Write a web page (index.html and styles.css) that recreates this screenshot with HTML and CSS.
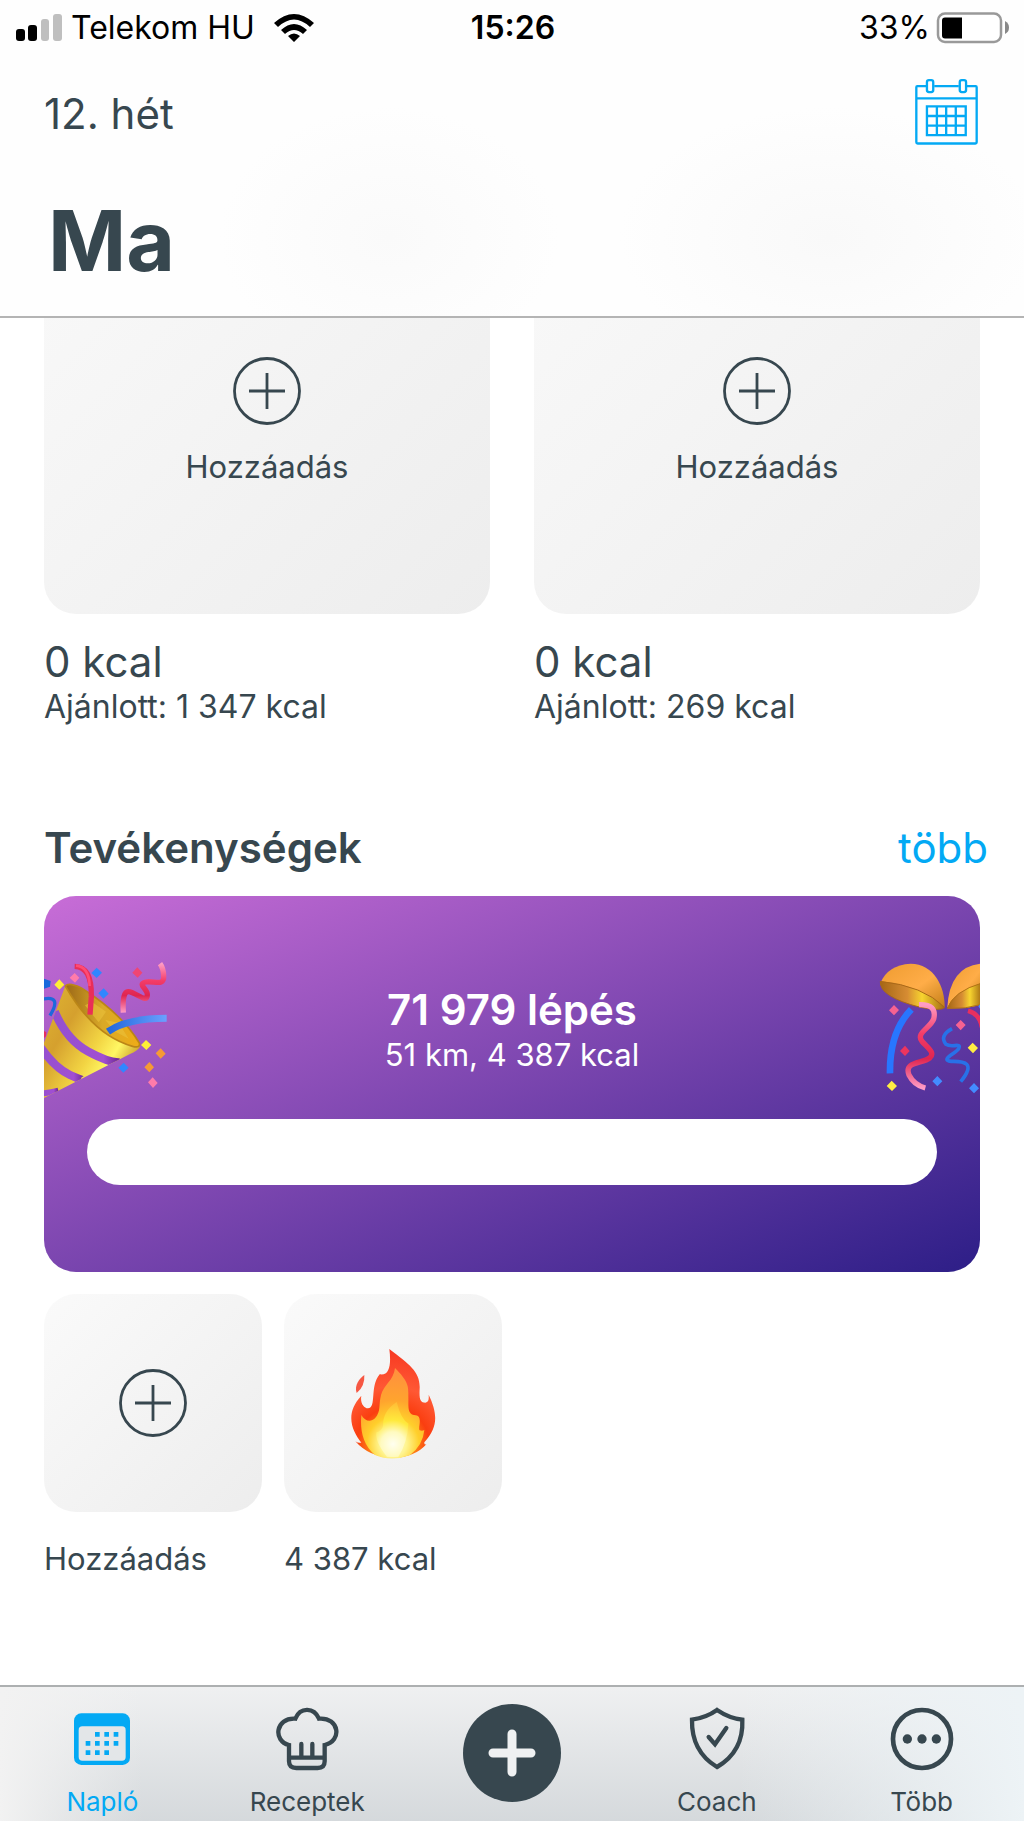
FILE: index.html
```html
<!DOCTYPE html>
<html lang="hu">
<head>
<meta charset="utf-8">
<meta name="viewport" content="width=device-width, initial-scale=1">
<title>Ma</title>
<link rel="stylesheet" href="styles.css">
</head>
<body>
<svg class="defs" aria-hidden="true">
  <symbol id="add" viewBox="0 0 68 68"><g fill="none" stroke="#37474f" stroke-width="2.8"><circle cx="34" cy="34" r="32.5"/><path d="M34 16v36M16 34h36"/></g></symbol>
</svg>
<header class="top">
  <div class="status">
    <div class="carrier">
      <svg width="46" height="28" viewBox="0 0 46 28" aria-hidden="true"><rect x="0" y="15" width="9" height="12" rx="3"/><rect x="12" y="11" width="9" height="16" rx="3"/><g fill="#bfbfbf"><rect x="25" y="5" width="8" height="22" rx="3"/><rect x="37" y="0" width="9" height="27" rx="3"/></g></svg>
      <span>Telekom HU</span>
      <svg class="wifi" width="40" height="28" viewBox="0 0 40 28" aria-hidden="true"><path d="M20 28l-6-6q6-5 12 0zM0 9Q20-9 40 9l-4 4Q20-2 4 13zM7 16q13-12 26 0l-4 4Q20 12 11 20z"/></svg>
    </div>
    <time class="clock">15:26</time>
    <div class="power">
      <span>33%</span>
      <svg width="74" height="32" viewBox="0 0 74 32" aria-hidden="true"><rect x="2" y="1.5" width="63" height="28.500" rx="7" fill="#fff" stroke="#999" stroke-width="2.500"/><path d="M69 9q4 2 4 6.500t-4 6.500z" fill="#888"/><path d="M9 5.500h17v21H9a3 3 0 0 1-3-3v-15a3 3 0 0 1 3-3z"/></svg>
    </div>
  </div>
  <div class="week">
    <span>12. hét</span>
    <button class="icon-button" type="button" aria-label="Naptár">
      <svg width="63" height="66" viewBox="1208 237 190 198"><g fill="none" stroke="#03a9f4" stroke-width="7"><path d="M1242 258h-27q-3 0-3 3v166q0 4 4 4h174q4 0 4-4V261q0-3-3-3h-28M1266 258h74M1212 295h182"/><rect x="1244" y="240" width="19" height="36" rx="6"/><rect x="1343" y="240" width="19" height="36" rx="6"/><path d="M1244 319h117v87h-117zM1274 319v87M1302 319v87M1331 319v87M1244 348h117M1244 377h117"/></g></svg>
    </button>
  </div>
  <h1>Ma</h1>
</header>

<main>
  <section class="meals">
    <article>
      <button class="tile meal" type="button"><svg width="68" height="68"><use href="#add"/></svg><span>Hozzáadás</span></button>
      <p class="amount">0 kcal</p>
      <p class="note">Ajánlott: 1 347 kcal</p>
    </article>
    <article>
      <button class="tile meal" type="button"><svg width="68" height="68"><use href="#add"/></svg><span>Hozzáadás</span></button>
      <p class="amount">0 kcal</p>
      <p class="note">Ajánlott: 269 kcal</p>
    </article>
  </section>

  <section>
    <div class="section-head"><h2>Tevékenységek</h2><a href="#tobb">több</a></div>
    <div class="steps">
      <div class="steps-row">
        <svg width="123" height="140" viewBox="42 240 369 420" aria-hidden="true">
          <defs>
            <linearGradient id="cone" x1="0" y1="0" x2="1" y2=".7"><stop offset="0" stop-color="#e0b832"/><stop offset=".35" stop-color="#d5a02e"/><stop offset=".62" stop-color="#f2d443"/><stop offset=".78" stop-color="#fff763"/><stop offset="1" stop-color="#b98217"/></linearGradient>
            <linearGradient id="mouth"><stop offset="0" stop-color="#9c6817"/><stop offset=".5" stop-color="#d9a928"/><stop offset="1" stop-color="#efac16"/></linearGradient>
            <linearGradient id="band"><stop offset="0" stop-color="#9450cf"/><stop offset=".75" stop-color="#a14fd2"/><stop offset="1" stop-color="#6a2590"/></linearGradient>
            <linearGradient id="pink" x1="0" y1="0" x2="0" y2="1"><stop offset="0" stop-color="#ff9cc4"/><stop offset=".35" stop-color="#f33c68"/><stop offset=".65" stop-color="#df2550"/><stop offset="1" stop-color="#ff9cc6"/></linearGradient>
            <linearGradient id="blue"><stop offset="0" stop-color="#2268dc"/><stop offset="1" stop-color="#6ba0ff"/></linearGradient>
            <clipPath id="coneclip"><path d="M107 315 330 500Q322 513 300 522L30 660V520z"/></clipPath>
          </defs>
          <path d="M107 315 330 500Q322 513 300 522L30 660V520z" fill="url(#cone)"/>
          <g clip-path="url(#coneclip)" fill="none" stroke="url(#band)" stroke-width="25"><path d="M74 395Q110 480 175 515T270 547"/><path d="M30 500Q75 565 120 585T165 600"/><path d="M30 640Q55 640 85 632" stroke-width="18"/></g>
          <path d="M106 318q10-12 48 6 120 75 174 165 4 16-20 10Q190 466 106 318z" fill="url(#mouth)" stroke="#bb8617" stroke-width="5"/>
          <path d="m165 376 21-10 42 29-22 32zM226 420l40 8 30 48-42-22z" fill="#ebc13a" opacity=".6"/>
          <path d="M134 259Q186 260 184 350L180 404" fill="none" stroke="#e92e57" stroke-width="16"/><path d="M138 257Q177 260 179 318" fill="none" stroke="#ff4b75" stroke-width="8"/>
          <path d="M234 455Q290 415 410 415" fill="none" stroke="url(#blue)" stroke-width="21"/>
          <path d="M36 358q62-14 24 49" fill="none" stroke="#1e69db" stroke-width="10"/><path d="M38 295l24 8-2 17-22 8z" fill="#1769dc"/>
          <path d="M280 398q-4-64 15-63c23 1 58 39 57 8-1-18-32-31-4-37 23-5 55 15 53-18q-1-24-11-37" fill="none" stroke="url(#pink)" stroke-width="16"/>
          <path d="m42 453 7 4-1 12-6 5z" fill="#e52d61"/>
          <g fill="#3186ff"><path d="m200 263 16 15-16 16-16-15zM221 325l15 16-16 15-15-16zM281 548l15 15-16 15-15-15z"/></g>
          <path d="m88 298 15 16-15 15-15-15zM348 480l16 15-15 15-16-15z" fill="#ffee37"/><path d="m392 505 15 16-15 15-15-16zM358 546l14 16-14 15-15-15z" fill="#f69a35"/><path d="m134 279 14 14-13 15-16-15zM368 592l15 17-14 15-15-17z" fill="#ff7baa"/><path d="m322 262 15 16-14 15-16-15z" fill="#f04573"/>
        </svg>
        <div class="steps-text"><strong>71 979 lépés</strong><span>51 km, 4 387 kcal</span></div>
        <svg width="102" height="140" viewBox="84 240 306 420" aria-hidden="true">
          <defs>
            <linearGradient id="bowl" x1="0" y1="0" x2="1" y2="1"><stop offset="0" stop-color="#ee9b30"/><stop offset=".55" stop-color="#ffad48"/><stop offset="1" stop-color="#c17d16"/></linearGradient>
            <linearGradient id="inside"><stop offset="0" stop-color="#a56615"/><stop offset=".42" stop-color="#d68c33"/><stop offset=".65" stop-color="#f7d42f"/><stop offset="1" stop-color="#a36912"/></linearGradient>
          </defs>
          <path d="M91 310Q112 255 182 251c69 1 103 67 102 132q-105 15-193-73z" fill="url(#bowl)"/><path d="M91 304q-4 46 120 78 65 12 73 0-65-65-193-78z" fill="url(#inside)" stroke="#a96818" stroke-width="3"/>
          <path d="M292 382Q299 258 396 251V315Q340 329 292 382z" fill="url(#bowl)"/><path d="M396 309Q310 334 292 385q55 3 104-12z" fill="url(#inside)" stroke="#b17117" stroke-width="3"/>
          <path d="M184 388Q118 456 120 580" fill="none" stroke="#2876ff" stroke-width="20"/>
          <path d="M207 374q55-2 44 43c-10 27-55 42-35 67 20 22 40 35 23 50-23 17-78 10-62 51q15 30 49 39" fill="none" stroke="url(#pink)" stroke-width="16"/>
          <path d="M306 446q-39 22-18 47c17 12 47-7 38 13-9 15-58 33-22 38 40-1 74 5 28 61" fill="none" stroke="#2871e8" stroke-width="11"/>
          <path d="M354 392Q389 401 396 442" fill="none" stroke="#e82f5e" stroke-width="14"/>
          <path d="m132 375 15 15-15 16-15-15zM332 420l15 15-15 16-15-16z" fill="#f66291"/><path d="m165 497 14 16-14 15-15-15z" fill="#ed355e"/><path d="m125 602 16 16-15 15-16-15zM368 488l16 16-15 16-16-17z" fill="#ffed43"/><path d="m262 588 15 16-15 15-15-15zM372 609l15 16-15 15-15-15zM390 373l-5 6 5 7z" fill="#438bff"/>
        </svg>
      </div>
      <div class="bar" role="progressbar" aria-label="Lépések" aria-valuenow="100"></div>
    </div>
    <div class="activities">
      <article><button class="tile square" type="button" aria-labelledby="add-label"><svg width="68" height="68"><use href="#add"/></svg></button><p id="add-label" class="note">Hozzáadás</p></article>
      <article><button class="tile square" type="button" aria-labelledby="burn-label">
        <svg width="88" height="112" viewBox="960 200 264 336">
          <defs>
            <radialGradient id="outer" gradientUnits="userSpaceOnUse" cx="1092" cy="490" r="285"><stop offset=".18" stop-color="#ff9b18"/><stop offset=".38" stop-color="#fa3e10"/><stop offset=".6" stop-color="#ff5834"/><stop offset="1" stop-color="#f73721"/></radialGradient>
            <radialGradient id="inner" gradientUnits="userSpaceOnUse" cx="1092" cy="490" r="225"><stop offset="0" stop-color="#fffce0"/><stop offset=".18" stop-color="#fff48f"/><stop offset=".35" stop-color="#ffcf2b"/><stop offset=".58" stop-color="#ffa42e"/><stop offset="1" stop-color="#ff8f3f"/></radialGradient>
            <radialGradient id="glow" gradientUnits="userSpaceOnUse" cx="1092" cy="491" r="130"><stop offset="0" stop-color="#fffff0"/><stop offset=".28" stop-color="#fffac0"/><stop offset=".55" stop-color="#ffe93c"/><stop offset="1" stop-color="#ffc63d" stop-opacity=".5"/></radialGradient>
          </defs>
          <path d="M1081 206c60 46 93 68 91 118-2 34 2 43 17 43 10-1 11-10 10-24 28 58 28 99-13 143q-1 8 6 6-35 40-102 41-70-3-111-50 8 6 18 4c-29-38-50-87 0-141-4 22 7 37 20 38 27-1 4-65 35-102 30 5 35-30 29-76z" fill="url(#outer)"/>
          <path d="M1006 284q2 35-23 54c-8-22 8-44 23-54z" fill="#f65743"/>
          <path d="M1098 263c43 43 40 57 40 85 1 27-4 51 16 56 32-1 11 39 18 46q8 3 14-1-4 46-44 76-56 20-104-1c-38-32-45-78-41-120 10 18 28 23 41 10 19-22 10-39 18-70 8-31 38-43 42-81z" fill="url(#inner)"/>
          <path d="M1103 365q13 52 35 65-2 54-30 100h-34q-36-45-32-74 16-4 20-19-1-45 41-72z" fill="url(#glow)"/>
        </svg></button><p id="burn-label" class="note">4 387 kcal</p></article>
    </div>
    <span class="next-peek"></span>
  </section>
</main>

<nav class="tabs">
  <a class="active" href="#naplo"><svg width="64" height="64" viewBox="211 111 192 192"><rect x="223" y="130" width="168" height="155" rx="22" fill="#03a9f4"/><rect x="237" y="169" width="141" height="103" rx="11" fill="#e3e6e8"/><path fill="none" stroke="#03a9f4" stroke-width="14" d="M286 193h14M314 193h14M342 193h14M258 220h14M286 220h14M314 220h14M342 220h14M258 248h14M286 248h14M314 248h14"/></svg>Napló</a>
  <a href="#receptek"><svg width="64" height="64" viewBox="826 111 192 192"><path d="M868 225c-49-12-41-83 19-79 15-36 56-34 71 0 62-5 70 68 17 79v49q0 20-21 20h-64q-22 0-22-20zM868 263h107M905 222v41M938 222v41" fill="none" stroke="#37474f" stroke-width="13" stroke-linecap="round"/></svg>Receptek</a>
  <button class="plus" type="button" aria-label="Új bejegyzés"><svg width="98" height="98" viewBox="0 0 98 98"><circle cx="49" cy="49" r="49" fill="#37474f"/><path d="M49 30v38M30 49h38" stroke="#eff1f2" stroke-width="9" stroke-linecap="round"/></svg></button>
  <a href="#coach"><svg width="64" height="64" viewBox="518 111 192 192"><path d="M614 120q-32 23-75 29-2 96 75 142 80-46 76-142-39-4-76-29zM589 201l19 22 34-49" fill="none" stroke="#37474f" stroke-width="13" stroke-linecap="round" stroke-linejoin="miter"/></svg>Coach</a>
  <a href="#more"><svg width="64" height="64" viewBox="1129 111 192 192"><circle cx="1225" cy="207" r="87" fill="none" stroke="#37474f" stroke-width="14"/><g fill="#37474f"><circle cx="1181" cy="207" r="14"/><circle cx="1225" cy="207" r="14"/><circle cx="1268" cy="207" r="14"/></g></svg>Több</a>
</nav>
</body>
</html>
```
FILE: styles.css
```css
* { box-sizing: border-box; }

body {
  margin: 0;
  height: 100vh;
  display: flex;
  flex-direction: column;
  background: #fff;
  color: #37474f;
  font: 32px/44px Inter, "Liberation Sans", sans-serif;
}

h1, h2, p { margin: 0; }
button { border: 0; padding: 0; background: none; color: inherit; font: inherit; }
a { color: #03a9f4; text-decoration: none; }
svg { display: block; flex: none; }
.defs { position: absolute; width: 0; height: 0; }

.top {
  flex: none;
  background:
    radial-gradient(ellipse 170px 130px at 38% 75%, #fafafa, transparent),
    radial-gradient(ellipse 210px 130px at 81% 75%, #f9f9f9, transparent),
    #fefefe;
  border-bottom: 2px solid #b4b4b4;
}

.status {
  display: grid;
  grid-template-columns: 1fr auto 1fr;
  align-items: center;
  height: 56px;
  padding: 0 14px 0 16px;
  color: #000;
}
.carrier, .power { display: flex; align-items: center; gap: 9px; }
.carrier .wifi { margin-left: 10px; }
.power { justify-content: flex-end; gap: 6px; }
.clock { font-weight: 600; }

.week {
  display: flex;
  justify-content: space-between;
  align-items: center;
  height: 112px;
  padding: 0 46px 0 44px;
  font-size: 42px;
}
.week span { padding-top: 4px; }
h1 {
  padding: 20px 48px 22px;
  font-size: 84px;
  line-height: 106px;
  font-weight: 700;
}

main { flex: 1; min-height: 0; overflow: hidden; padding: 0 44px; }

.meals {
  display: grid;
  grid-template-columns: 1fr 1fr;
  gap: 44px;
  margin-top: -150px;
}
.tile {
  display: flex;
  align-items: center;
  justify-content: center;
  width: 100%;
  aspect-ratio: 1;
  border-radius: 32px;
  background: linear-gradient(135deg, #fafafa, #ededed);
}
.meal { flex-direction: column; gap: 20px; padding-top: 64px; font-size: 31px; }

.amount { margin-top: 24px; font-size: 42px; line-height: 48px; }
.amount + .note { line-height: 42px; }

.section-head {
  display: flex;
  justify-content: space-between;
  margin: 92px -8px 20px 0;
  font-size: 42px;
  line-height: 56px;
}
h2 { font-size: 42px; font-weight: 600; }

.steps {
  padding: 64px 0 87px;
  border-radius: 32px;
  background: linear-gradient(to bottom right, #c86dd7, #2d1e87);
  color: #fff;
}
.steps-row { display: grid; grid-template-columns: 1fr auto 1fr; }
.steps-row > :last-child { justify-self: end; }
.steps-text {
  display: flex;
  flex-direction: column;
  align-items: center;
  padding-top: 26px;
  font-size: 31px;
  line-height: 42px;
}
.steps-text strong { font-size: 42px; line-height: 48px; font-weight: 600; }
.bar { height: 66px; margin: 19px 43px 0; border-radius: 33px; background: #fff; }

.activities { display: flex; gap: 22px; margin-top: 22px; }
.activities article { width: 218px; }
.activities .note { margin-top: 25px; font-size: 31px; white-space: nowrap; }

.next-peek { display: block; width: 6px; height: 2px; margin: 105px 0 0 143px; background: #37474f; }

.tabs {
  flex: none;
  display: grid;
  grid-template-columns: repeat(5, 1fr);
  height: 136px;
  border-top: 2px solid #adb0b1;
  background:
    linear-gradient(to right, #f2f2f2, transparent 14%),
    linear-gradient(to left, #edf3f6, transparent 28%),
    linear-gradient(#eff0f1, #d5d9dc);
  font-size: 26px;
  line-height: 32px;
}
.tabs a {
  display: flex;
  flex-direction: column;
  align-items: center;
  gap: 15px;
  padding-top: 20px;
  color: #37474f;
}
.tabs .active { color: #03a9f4; }
.plus { display: flex; justify-content: center; padding-top: 17px; }
```
